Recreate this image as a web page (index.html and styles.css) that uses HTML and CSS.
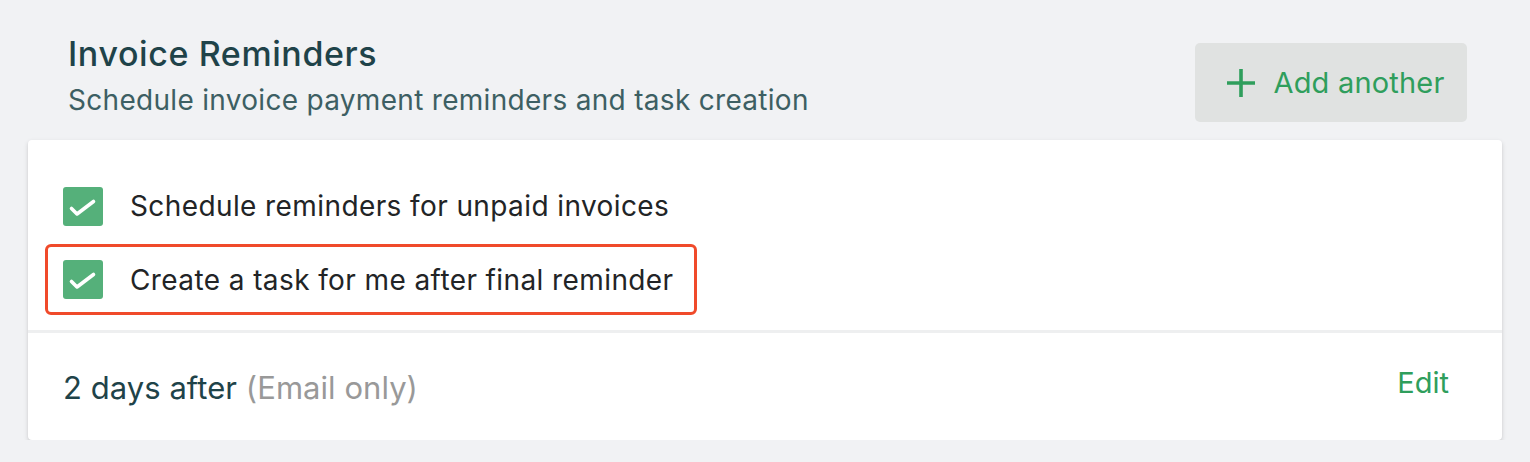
FILE: index.html
```html
<!DOCTYPE html>
<html>
<head>
<meta charset="utf-8">
<link rel="stylesheet" href="styles.css">
</head>
<body>
<div class="page">
  <div class="header">
    <div class="titles">
      <h1 class="title">Invoice Reminders</h1>
      <p class="subtitle">Schedule invoice payment reminders and task creation</p>
    </div>
    <button class="add-btn">
      <svg class="plus" width="28" height="28" viewBox="0 0 28 28"><path d="M14 0v28M0 14h28" stroke="#2f9e5c" stroke-width="3.6" fill="none"/></svg>
      <span>Add another</span>
    </button>
  </div>
  <div class="card">
    <div class="options">
      <div class="option">
        <span class="check"><svg width="40" height="39" viewBox="0 0 40 39"><path d="M8.5 21.5L14 27L30.5 14.5" stroke="#fff" stroke-width="3.6" fill="none" stroke-linecap="round" stroke-linejoin="round"/></svg></span>
        <span class="label">Schedule reminders for unpaid invoices</span>
      </div>
      <div class="option highlighted">
        <span class="check"><svg width="40" height="39" viewBox="0 0 40 39"><path d="M8.5 21.5L14 27L30.5 14.5" stroke="#fff" stroke-width="3.6" fill="none" stroke-linecap="round" stroke-linejoin="round"/></svg></span>
        <span class="label">Create a task for me after final reminder</span>
      </div>
    </div>
    <div class="row">
      <span class="when">2 days after <span class="muted">(Email only)</span></span>
      <a class="edit">Edit</a>
    </div>
  </div>
</div>
</body>
</html>
```

FILE: styles.css
```css
html, body {
  margin: 0;
  padding: 0;
  background: #f1f2f4;
  font-family: Inter, "Noto Sans", sans-serif;
}
.page {
  padding: 0 28px;
  width: 1474px;
}
.header {
  display: flex;
  justify-content: space-between;
  align-items: flex-start;
  padding: 34px 35px 0 40px;
  height: 140px;
  box-sizing: border-box;
}
.title {
  margin: 0;
  font-size: 34px;
  font-weight: 500;
  color: #1f4349;
  line-height: 40px;
  letter-spacing: 0.6px;
}
.subtitle {
  margin: 9px 0 0 0;
  font-size: 28px;
  color: #3d5f63;
  line-height: 34px;
  letter-spacing: 0.3px;
}
.add-btn {
  margin-top: 9px;
  width: 272px;
  height: 79px;
  border: none;
  border-radius: 5px;
  background: #e0e2e1;
  display: flex;
  align-items: center;
  justify-content: center;
  gap: 18px;
  font-family: inherit;
  font-size: 29px;
  font-weight: 400;
  color: #2f9e5c;
  padding: 0 0 0 10px;
  letter-spacing: 0.2px;
}
.card {
  background: #fff;
  border-radius: 4px;
  box-shadow: 0 2px 5px rgba(0,0,0,0.14), 0 1px 2px rgba(0,0,0,0.06);
  height: 300px;
}
.options {
  padding: 34px 0 15px 17px;
  border-bottom: 3px solid #eeeff0;
  display: flex;
  flex-direction: column;
  gap: 6px;
}
.option {
  display: flex;
  align-items: center;
  height: 64px;
  width: 652px;
  padding-left: 18px;
  box-sizing: border-box;
  gap: 27px;
}
.option.highlighted {
  border: 3px solid #f04a2a;
  border-radius: 6px;
  height: 71px;
  padding-left: 15px;
}
.check {
  width: 40px;
  height: 39px;
  background: #55b07a;
  border-radius: 3px;
  display: flex;
  flex: none;
}
.label {
  font-size: 28px;
  color: #222426;
  letter-spacing: 0.4px;
}
.row {
  display: flex;
  justify-content: space-between;
  align-items: center;
  padding: 2px 53px 0 35px;
  height: 107px;
  box-sizing: border-box;
}
.when {
  font-size: 31px;
  color: #1f4349;
  font-weight: 400;
  letter-spacing: 0.05px;
}
.muted {
  color: #999;
}
.edit {
  font-size: 29px;
  color: #2f9e5c;
  font-weight: 400;
  margin-bottom: 10px;
}
```
